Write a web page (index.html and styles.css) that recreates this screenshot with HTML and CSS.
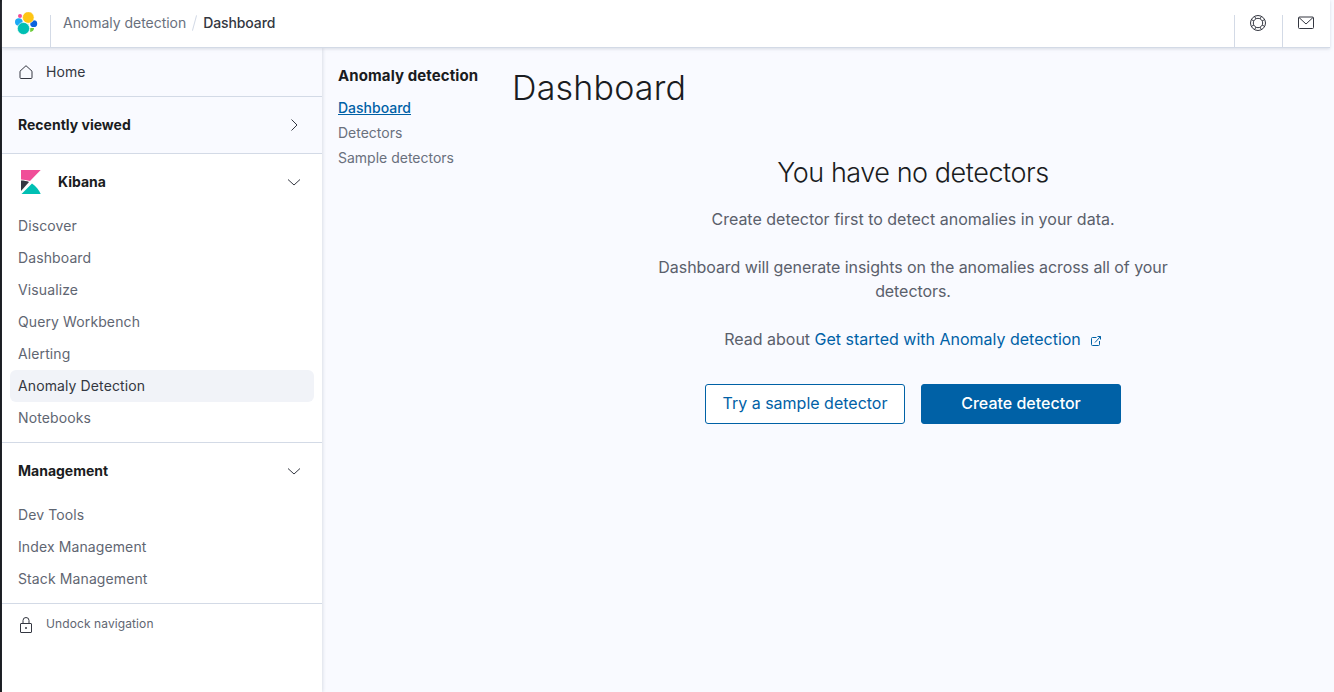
FILE: index.html
```html
<!DOCTYPE html>
<html lang="en">
<head>
<meta charset="utf-8">
<title>Dashboard</title>
<link rel="stylesheet" href="styles.css">
</head>
<body>
<div class="app">
  <header class="topbar">
    <div class="logo-cell">
      <svg class="logo" width="23" height="23" viewBox="0 0 23 23">
        <circle cx="5" cy="4" r="2" fill="#f04e98"/>
        <ellipse cx="3.800" cy="10" rx="3.800" ry="3.700" fill="#1ba9f5"/>
        <ellipse cx="18.700" cy="11.700" rx="3.500" ry="3.400" fill="#0b64dd"/>
        <circle cx="13.300" cy="5.500" r="5.800" fill="#fec514" stroke="#fff" stroke-width=".6"/>
        <path d="M15.200 16h3.800c0 2.300-1.300 3.700-3.800 4z" fill="#6dcc3a"/>
        <circle cx="8.500" cy="16.500" r="6.100" fill="#00bfb3" stroke="#fff" stroke-width=".6"/>
      </svg>
    </div>
    <nav class="crumbs">
      <span class="crumb">Anomaly detection</span>
      <span class="crumb-sep"></span>
      <span class="crumb-current">Dashboard</span>
    </nav>
    <div class="top-icons">
      <div class="top-icon">
        <svg width="16" height="16" viewBox="0 0 16 16" fill="none" stroke="#343741" stroke-width="1">
          <circle cx="8" cy="8" r="7.500"/>
          <circle cx="8" cy="8" r="4.700"/>
          <path d="M12.190 5.870 14.680 4.600M10.130 3.810 11.400 1.320M3.810 5.870 1.320 4.600M5.870 3.810 4.600 1.320M12.190 10.130 14.680 11.400M10.130 12.190 11.400 14.680M3.810 10.130 1.320 11.400M5.870 12.190 4.600 14.680"/>
        </svg>
      </div>
      <div class="top-icon mail">
        <svg width="16" height="14" viewBox="0 0 16 14" fill="none" stroke="#343741" stroke-width="1">
          <rect x="0.500" y="1" width="15" height="11.500" rx="1"/>
          <path d="M1 1.500l7 6.500 7-6.500"/>
        </svg>
      </div>
    </div>
  </header>

  <div class="body-row">
    <aside class="sidenav">
      <a class="home-row">
        <svg width="16" height="16" viewBox="0 0 16 16" fill="none" stroke="#343741" stroke-width="1"><path d="M2 7.200 8 1.700l6 5.500v6.300a1 1 0 0 1-1 1H3a1 1 0 0 1-1-1z" stroke-linejoin="round"/></svg>
        <span class="nudge">Home</span>
      </a>
      <div class="recent-row">
        <span class="section-title nudge">Recently viewed</span>
        <svg width="16" height="16" viewBox="0 0 16 16" fill="none" stroke="#343741" stroke-width="1"><path d="M5.500 2.500 11 8l-5.500 5.500"/></svg>
      </div>
      <section class="group">
        <div class="group-head">
          <span class="group-title">
            <svg class="kibana" width="21" height="24" viewBox="0 0 21 24">
              <path d="M1 0H20.700L10 11C7 10 4 9.500 1 9.500Z" fill="#f04e98"/>
              <path d="M1 10.500C4 10.500 7 11 9 12L1 21Z" fill="#343741"/>
              <path d="M1.500 24L12 13.500C16 16 19 20 20.700 24Z" fill="#00bfb3"/>
            </svg>
            <span class="section-title nudge">Kibana</span>
          </span>
          <svg width="16" height="16" viewBox="0 0 16 16" fill="none" stroke="#343741" stroke-width="1"><path d="M2 5.500 8 11l6-5.500"/></svg>
        </div>
        <ul class="links">
          <li>Discover</li>
          <li>Dashboard</li>
          <li>Visualize</li>
          <li>Query Workbench</li>
          <li>Alerting</li>
          <li class="active">Anomaly Detection</li>
          <li>Notebooks</li>
        </ul>
      </section>
      <section class="group">
        <div class="group-head">
          <span class="section-title nudge">Management</span>
          <svg width="16" height="16" viewBox="0 0 16 16" fill="none" stroke="#343741" stroke-width="1"><path d="M2 5.500 8 11l6-5.500"/></svg>
        </div>
        <ul class="links">
          <li>Dev Tools</li>
          <li>Index Management</li>
          <li>Stack Management</li>
        </ul>
      </section>
      <div class="undock">
        <svg width="16" height="16" viewBox="0 0 16 16" fill="none" stroke="#343741" stroke-width="1"><rect x="2.500" y="6.500" width="11" height="9" rx="0.500"/><path d="M5 6.500V3.500a3 3 0 0 1 6 0v3"/><circle cx="8" cy="11" r="1" fill="#343741" stroke="none"/></svg>
        <span class="nudge">Undock navigation</span>
      </div>
    </aside>

    <div class="subnav">
      <h2>Anomaly detection</h2>
      <a class="sub-link current">Dashboard</a>
      <a class="sub-link">Detectors</a>
      <a class="sub-link">Sample detectors</a>
    </div>

    <main class="main">
      <h1>Dashboard</h1>
      <div class="empty">
        <h3>You have no detectors</h3>
        <p class="first">Create detector first to detect anomalies in your data.</p>
        <p class="insights">Dashboard will generate insights on the anomalies across all of your detectors.</p>
        <p class="read">Read about <a class="ext">Get started with Anomaly detection<svg width="12" height="12" viewBox="0 0 12 12" fill="none" stroke="#0061a6" stroke-width="1"><path d="M6.500 2.500H2.500a1 1 0 0 0-1 1v6a1 1 0 0 0 1 1h6a1 1 0 0 0 1-1V6"/><path d="M5 7.500 10.500 1.500M7.500 1.500h3v3"/></svg></a></p>
        <div class="actions">
          <button class="btn outline">Try a sample detector</button>
          <button class="btn fill">Create detector</button>
        </div>
      </div>
    </main>
  </div>
</div>
</body>
</html>
```
FILE: styles.css
```css
* { box-sizing: border-box; }
html, body { margin: 0; height: 100%; overflow: hidden; }
body {
  font-family: Inter, "Noto Sans", sans-serif;
  background: #f9faff;
  color: #343741;
  font-size: 14px;
}
.app {
  height: 692px;
  width: 1330px;
  border-left: 2px solid #1a1c21;
  display: flex;
  flex-direction: column;
  background: #f9faff;
}
.nudge { margin-bottom: 2px; }
.topbar {
  height: 48px;
  flex: none;
  background: #fff;
  border-bottom: 1px solid #d3dae6;
  box-shadow: 0 1px 3px rgba(152,162,179,.35);
  display: flex;
  position: relative;
  z-index: 2;
}
.logo-cell {
  width: 49px;
  height: 47px;
  padding: 12px 0 0 13px;
  position: relative;
}
.logo-cell::after {
  content: "";
  position: absolute;
  right: 0;
  top: 15px;
  bottom: 0;
  width: 1px;
  background: #d3dae6;
}
.logo { display: block; }
.crumbs {
  display: flex;
  align-items: center;
  padding: 0 0 2px 12px;
  height: 47px;
  font-size: 14px;
  letter-spacing: -.03px;
}
.crumb { color: #69707d; }
.crumb-sep {
  width: 1px;
  height: 16px;
  background: #d3dae6;
  transform: rotate(15deg);
  margin: 0 8px;
}
.crumb-current { color: #343741; font-weight: 500; letter-spacing: -.1px; }
.top-icons { margin-left: auto; display: flex; height: 47px; }
.top-icon {
  width: 48px;
  padding: 15px 0 0 15px;
  position: relative;
}
.top-icon::before {
  content: "";
  position: absolute;
  left: -1px;
  top: 15px;
  bottom: 0;
  width: 1px;
  background: #d3dae6;
}
.top-icon svg { display: block; }
.top-icon.mail { width: 47px; padding-top: 16px; }
.body-row { flex: 1; display: flex; min-height: 0; }
.sidenav {
  width: 320px;
  flex: none;
  background: #fff;
  box-shadow: 1px 0 3px rgba(152,162,179,.3);
  display: flex;
  flex-direction: column;
  position: relative;
  z-index: 1;
}
.home-row {
  height: 49px;
  background: #f9faff;
  border-bottom: 1px solid #d3dae6;
  display: flex;
  align-items: center;
  gap: 12px;
  padding-left: 16px;
  color: #343741;
  font-size: 14px;
  letter-spacing: .08px;
}
.recent-row {
  height: 57px;
  background: #f9faff;
  border-bottom: 1px solid #d3dae6;
  display: flex;
  align-items: center;
  justify-content: space-between;
  padding: 0 20px 0 16px;
}
.section-title { font-weight: 700; color: #1a1c21; font-size: 14px; }
.group { border-bottom: 1px solid #d3dae6; }
.group-head {
  display: flex;
  align-items: center;
  justify-content: space-between;
  padding: 0 20px 0 16px;
  height: 56px;
}
.group-title { display: flex; align-items: center; gap: 17px; padding-left: 2px; }
.kibana { display: block; }
.links { list-style: none; margin: 0; padding: 0 8px 8px; }
.links li {
  height: 32px;
  line-height: 32px;
  padding-left: 8px;
  color: #5f6672;
  border-radius: 6px;
  font-size: 14px;
  letter-spacing: .11px;
}
.links li.active { background: #f1f3f8; color: #343741; }
.undock {
  display: flex;
  align-items: center;
  gap: 12px;
  padding: 12px 16px;
  font-size: 12px;
  letter-spacing: .1px;
  color: #5f6672;
}
.subnav { width: 191px; flex: none; padding: 16px 0 0 16px; }
.subnav h2 {
  margin: 0 0 7px;
  font-size: 15px;
  line-height: 24px;
  font-weight: 700;
  letter-spacing: .1px;
  color: #1a1c21;
}
.sub-link {
  display: block;
  height: 25px;
  line-height: 25px;
  color: #69707d;
  font-size: 14px;
}
.sub-link.current { color: #0061a6; text-decoration: underline; font-weight: 500; }
.main { flex: 1; min-width: 0; padding-top: 16px; }
.main h1 {
  margin: 0 0 0 -1px;
  font-size: 34px;
  line-height: 48px;
  font-weight: 300;
  letter-spacing: .2px;
  color: #1a1c21;
}
.empty {
  width: 600px;
  margin-left: 100px;
  margin-top: 41px;
  text-align: center;
  padding: 0 40px;
  font-size: 16px;
  line-height: 24px;
  color: #5a606b;
}
.empty h3 {
  margin: 0;
  font-size: 27px;
  line-height: 40px;
  font-weight: 300;
  letter-spacing: -.45px;
  color: #1a1c21;
}
.empty p { margin: 0 0 24px; }
.empty p.first { margin-top: 14px; }
.empty p.insights { letter-spacing: -.07px; }
.empty p.read { margin-bottom: 33px; }
.ext { color: #0061a6; }
.ext svg { margin-left: 9px; vertical-align: -2px; }
.actions { display: flex; justify-content: center; gap: 16px; }
.btn {
  width: 200px;
  height: 40px;
  border-radius: 3px;
  font: 400 16px Inter, sans-serif;
  padding: 0 0 2px;
}
.outline { background: #fff; color: #0061a6; border: 1px solid #0061a6; }
.fill { background: #0061a6; color: #fff; border: 1px solid #0061a6; font-weight: 500; }
```
